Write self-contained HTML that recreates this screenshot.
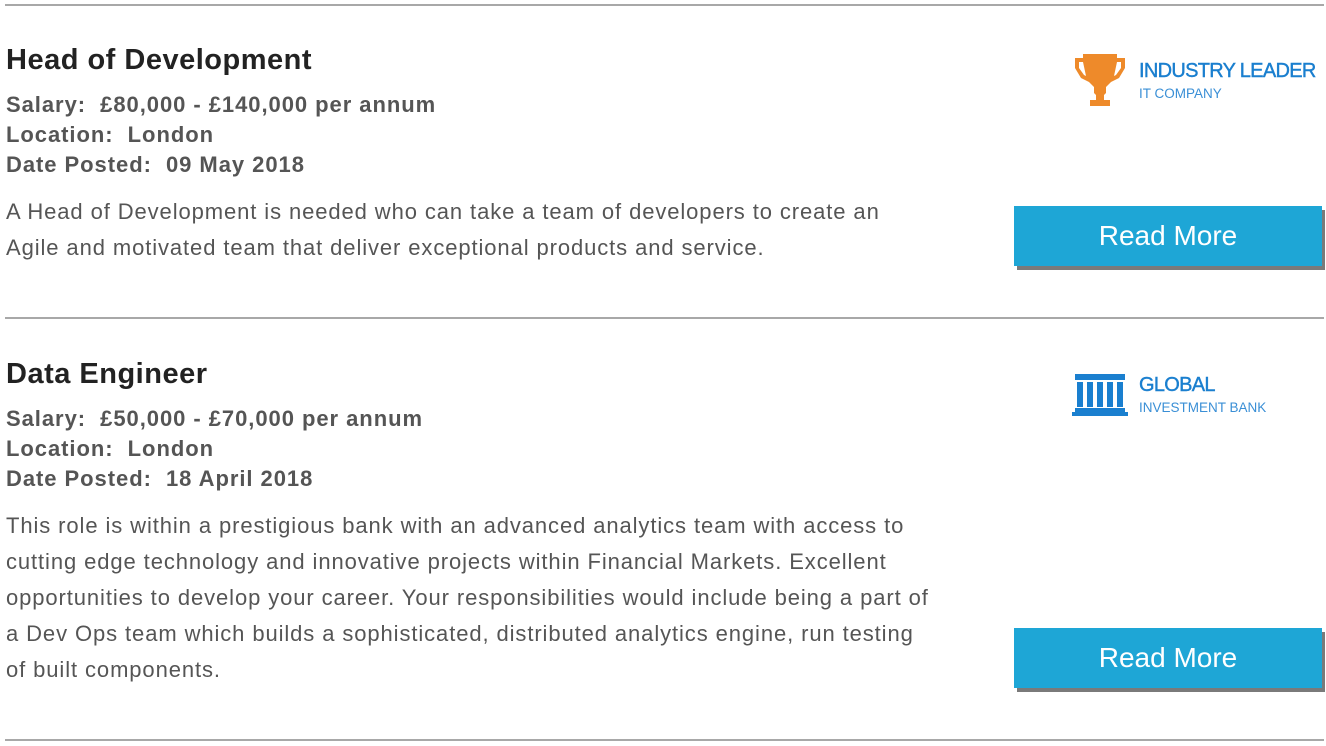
<!DOCTYPE html>
<html><head><meta charset="utf-8"><style>
body{margin:0;width:1326px;height:746px;background:#fff;position:relative;overflow:hidden;font-family:"Liberation Sans",Arial,sans-serif}
.hr{position:absolute;left:5px;width:1319px;height:2px;background:#a8a8a8}
.t{position:absolute;left:6px;font-weight:bold;font-size:29px;color:#222;line-height:34px;white-space:nowrap;letter-spacing:0.5px}
.m{position:absolute;left:6px;font-weight:bold;font-size:22px;color:#555;line-height:30px;white-space:pre;letter-spacing:0.95px}
.d{position:absolute;left:6px;font-size:22px;color:#555;line-height:36px;white-space:nowrap;letter-spacing:0.9px}
.btn{position:absolute;left:1014px;width:308px;height:60px;background:#1ea6d6;color:#fff;font-size:28px;text-align:center;line-height:60px;box-shadow:3px 4px 0 #7a7a7a}
.lg1{position:absolute;left:1139px;color:#1a7fcf;font-size:20px;line-height:24px;white-space:nowrap;letter-spacing:-0.7px;-webkit-text-stroke:0.4px #1a7fcf}
.lg2{position:absolute;left:1139px;color:#3a8fd6;font-size:13.5px;line-height:16px;white-space:nowrap}
</style></head><body>
<div class="hr" style="top:4px"></div>
<div class="t" style="top:43px">Head of Development</div>
<div class="m" style="top:90px">Salary:  £80,000 - £140,000 per annum
Location:  London
Date Posted:  09 May 2018</div>
<div class="d" style="top:194px">A Head of Development is needed who can take a team of developers to create an<br>Agile and motivated team that deliver exceptional products and service.</div>
<svg style="position:absolute;left:1075px;top:54px" width="50" height="54" viewBox="0 0 50 54">
<path d="M8 0H42V4H50V14L44 24L36 28L31 33V39L29 41V46H35V52H15V46H21V41L19 39V33L14 28L6 24L0 14V4H8ZM4 8V14L9 21L11 22L8 8ZM46 8V14L41 21L39 22L42 8Z" fill="#ee8a2a" fill-rule="evenodd"/>
</svg>
<div class="lg1" style="top:59px">INDUSTRY LEADER</div>
<div class="lg2" style="top:86px">IT COMPANY</div>
<div class="btn" style="top:206px">Read More</div>
<div class="hr" style="top:317px"></div>
<div class="t" style="top:357px">Data Engineer</div>
<div class="m" style="top:404px">Salary:  £50,000 - £70,000 per annum
Location:  London
Date Posted:  18 April 2018</div>
<div class="d" style="top:508px">This role is within a prestigious bank with an advanced analytics team with access to<br>cutting edge technology and innovative projects within Financial Markets. Excellent<br>opportunities to develop your career. Your responsibilities would include being a part of<br>a Dev Ops team which builds a sophisticated, distributed analytics engine, run testing<br>of built components.</div>
<svg style="position:absolute;left:1072px;top:374px" width="56" height="42" viewBox="0 0 56 42">
<path d="M3 0H53V6H3ZM5 8H11V33H5ZM15 8H21V33H15ZM25 8H31V33H25ZM35 8H41V33H35ZM45 8H51V33H45ZM3 34H53V38H3ZM0 38H56V42H0Z" fill="#1a7fcf"/>
</svg>
<div class="lg1" style="top:373px">GLOBAL</div>
<div class="lg2" style="top:400px">INVESTMENT BANK</div>
<div class="btn" style="top:628px">Read More</div>
<div class="hr" style="top:739px"></div>
</body></html>
